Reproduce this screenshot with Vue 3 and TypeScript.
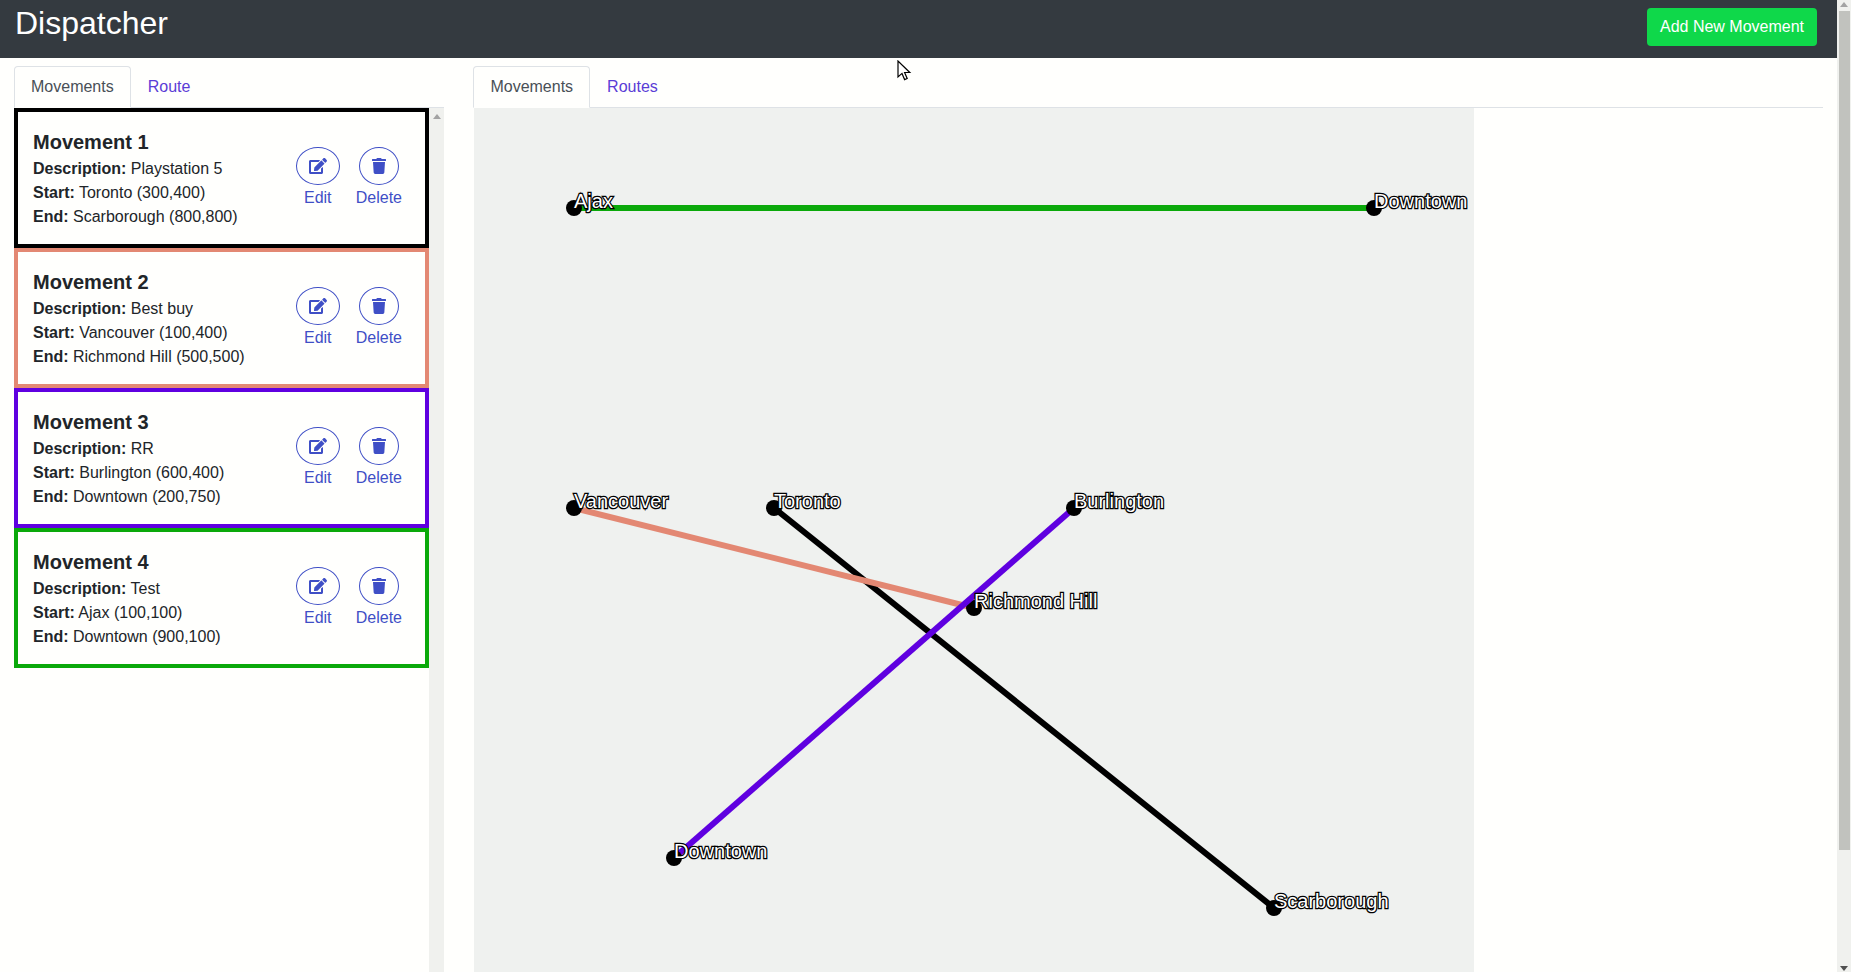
<template>
  <div class="page">
    <div class="content">
      <header class="topbar">
        <h1 class="brand">Dispatcher</h1>
        <button class="add-btn">Add New Movement</button>
      </header>

      <div class="panels">
        <section class="left">
          <ul class="tabs">
            <li class="tab active">Movements</li>
            <li class="tab">Route</li>
          </ul>
          <div class="list-wrap">
            <div class="list">
              <div
                v-for="m in movements"
                :key="m.title"
                class="card"
                :style="{ borderColor: m.color }"
              >
                <div class="card-info">
                  <h5 class="card-title">{{ m.title }}</h5>
                  <div class="card-line"><b>Description:</b> {{ m.description }}</div>
                  <div class="card-line"><b>Start:</b> {{ m.start.name }} ({{ m.start.x }},{{ m.start.y }})</div>
                  <div class="card-line"><b>End:</b> {{ m.end.name }} ({{ m.end.x }},{{ m.end.y }})</div>
                </div>
                <div class="card-actions">
                  <div class="action">
                    <span class="circle edit">
                      <svg class="icon-edit" viewBox="0 0 576 512">
                        <path d="M402.6 83.2l90.2 90.2c3.8 3.8 3.8 10 0 13.8L274.4 405.6l-92.8 10.3c-12.4 1.4-22.9-9.1-21.5-21.5l10.3-92.8L388.8 83.2c3.8-3.8 10-3.8 13.8 0zm162-22.9l-48.8-48.8c-15.2-15.2-39.9-15.2-55.2 0l-35.4 35.4c-3.8 3.8-3.8 10 0 13.8l90.2 90.2c3.8 3.8 10 3.8 13.8 0l35.4-35.4c15.2-15.3 15.2-40 0-55.2zM384 346.2V448H64V128h229.8c3.2 0 6.2-1.3 8.5-3.5l40-40c7.6-7.6 2.2-20.5-8.5-20.5H48C21.5 64 0 85.5 0 112v352c0 26.5 21.5 48 48 48h352c26.5 0 48-21.5 48-48V306.2c0-10.7-12.9-16-20.5-8.5l-40 40c-2.2 2.3-3.5 5.3-3.5 8.5z" />
                      </svg>
                    </span>
                    <span class="action-label">Edit</span>
                  </div>
                  <div class="action">
                    <span class="circle delete">
                      <svg class="icon-trash" viewBox="0 0 448 512">
                        <path d="M432 32H312l-9.4-18.7A24 24 0 0 0 281.1 0H166.8a23.72 23.72 0 0 0-21.4 13.3L136 32H16A16 16 0 0 0 0 48v32a16 16 0 0 0 16 16h416a16 16 0 0 0 16-16V48a16 16 0 0 0-16-16zM53.2 467a48 48 0 0 0 47.9 45h245.8a48 48 0 0 0 47.9-45L416 128H32z" />
                      </svg>
                    </span>
                    <span class="action-label">Delete</span>
                  </div>
                </div>
              </div>
            </div>
            <div class="list-scroll">
              <span class="arrow-up small"></span>
            </div>
          </div>
        </section>

        <section class="right">
          <ul class="tabs">
            <li class="tab active">Movements</li>
            <li class="tab">Routes</li>
          </ul>
          <svg class="map" width="1000" height="864" viewBox="0 0 1000 864">
            <rect width="1000" height="864" fill="#eff1ef" />
            <g v-for="m in movements" :key="m.title">
              <line
                :x1="m.start.x"
                :y1="m.start.y"
                :x2="m.end.x"
                :y2="m.end.y"
                :stroke="m.color"
                stroke-width="6"
              />
              <circle :cx="m.start.x" :cy="m.start.y" r="8" fill="#000" />
              <circle :cx="m.end.x" :cy="m.end.y" r="8" fill="#000" />
            </g>
            <g v-for="m in movements" :key="m.title + '-labels'">
              <text class="node-label" :x="m.start.x" :y="m.start.y">{{ m.start.name }}</text>
              <text class="node-label" :x="m.end.x" :y="m.end.y">{{ m.end.name }}</text>
            </g>
          </svg>
        </section>
      </div>
    </div>

    <aside class="page-scroll">
      <span class="arrow-up"></span>
      <span class="thumb"></span>
      <span class="arrow-down"></span>
    </aside>

    <svg class="cursor" width="16" height="22" viewBox="0 0 16 22">
      <path d="M1 1v16l4-3.6 2.6 6.2 2.6-1.1-2.6-6h5.2z" fill="#fff" stroke="#000" stroke-width="1.2" />
    </svg>
  </div>
</template>

<script setup lang="ts">
type Place = {
  name: string;
  x: number;
  y: number;
};

type Movement = {
  title: string;
  description: string;
  color: string;
  start: Place;
  end: Place;
};

const movements: Movement[] = [
  {
    title: 'Movement 1',
    description: 'Playstation 5',
    color: '#000000',
    start: { name: 'Toronto', x: 300, y: 400 },
    end: { name: 'Scarborough', x: 800, y: 800 }
  },
  {
    title: 'Movement 2',
    description: 'Best buy',
    color: '#e38873',
    start: { name: 'Vancouver', x: 100, y: 400 },
    end: { name: 'Richmond Hill', x: 500, y: 500 }
  },
  {
    title: 'Movement 3',
    description: 'RR',
    color: '#5f00e0',
    start: { name: 'Burlington', x: 600, y: 400 },
    end: { name: 'Downtown', x: 200, y: 750 }
  },
  {
    title: 'Movement 4',
    description: 'Test',
    color: '#0aa90a',
    start: { name: 'Ajax', x: 100, y: 100 },
    end: { name: 'Downtown', x: 900, y: 100 }
  }
];
</script>

<style>
html,
body {
  margin: 0;
  height: 100%;
  overflow: hidden;
  background: #fffffd;
}
</style>

<style scoped>
.page {
  position: relative;
  display: flex;
  width: 1851px;
  height: 972px;
  overflow: hidden;
  font-family: "Liberation Sans", Arial, sans-serif;
  font-size: 16px;
  line-height: 24px;
  color: #212529;
  background: #fffffd;
}

.content {
  flex: 1;
  min-width: 0;
}

.topbar {
  display: flex;
  justify-content: space-between;
  height: 58px;
  padding: 8px 20px 0 15px;
  box-sizing: border-box;
  background: #343a40;
}

.brand {
  margin: -4px 0 0;
  font-size: 32px;
  font-weight: 400;
  line-height: 38px;
  color: #fff;
}

.add-btn {
  width: 170px;
  height: 38px;
  padding: 0;
  border: none;
  border-radius: 4px;
  font-family: inherit;
  font-size: 16px;
  color: #fff;
  background: #0fd84a;
}

.panels {
  display: flex;
}

.left {
  width: 430px;
  margin: 8px 0 0 14px;
}

.right {
  flex: 1;
  margin: 8px 14px 0 30px;
}

.right .tabs {
  margin-left: -0.6px;
}

.tabs {
  display: flex;
  height: 42px;
  margin: 0;
  padding: 0;
  box-sizing: border-box;
  list-style: none;
  border-bottom: 1px solid #dee2e6;
}

.tab {
  height: 42px;
  padding: 8px 16px;
  box-sizing: border-box;
  border: 1px solid transparent;
  border-radius: 4px 4px 0 0;
  color: #5a3dd6;
}

.tab.active {
  color: #495057;
  background: #fffffd;
  border-color: #dee2e6 #dee2e6 #fffffd;
}

.list-wrap {
  display: flex;
  height: 864px;
}

.list {
  width: 415px;
}

.card {
  display: flex;
  align-items: flex-start;
  justify-content: space-between;
  height: 140px;
  padding: 18px 23px 0 15px;
  box-sizing: border-box;
  border: 4px solid #000;
}

.card-title {
  margin: 0 0 3px;
  font-size: 20px;
  font-weight: 700;
  line-height: 24px;
}

.card-line b {
  font-weight: 700;
}

.card-actions {
  display: flex;
  gap: 16px;
  margin-top: 17px;
}

.action {
  display: flex;
  flex-direction: column;
  align-items: center;
  color: #3f4fc6;
}

.circle {
  display: flex;
  align-items: center;
  justify-content: center;
  height: 38px;
  box-sizing: border-box;
  border: 1px solid #3f4fc6;
  border-radius: 50%;
}

.circle.edit {
  width: 44px;
}

.circle.delete {
  width: 40px;
}

.icon-edit {
  width: 18px;
  height: 16px;
  fill: #3f4fc6;
}

.icon-trash {
  width: 14px;
  height: 16px;
  fill: #3f4fc6;
}

.action-label {
  margin-top: 1px;
}

.list-scroll {
  width: 15px;
  background: #f0f1ee;
  display: flex;
  justify-content: center;
  padding-top: 6px;
  box-sizing: border-box;
}

.map {
  display: block;
}

.node-label {
  font-family: "Liberation Sans", Arial, sans-serif;
  font-size: 20px;
  fill: #fff;
  stroke: #000;
  stroke-width: 2.5px;
  paint-order: stroke;
}

.page-scroll {
  position: relative;
  flex: none;
  width: 14px;
  background: #f0f1ee;
}

.thumb {
  position: absolute;
  top: 11px;
  left: 2px;
  width: 11px;
  height: 839px;
  background: #c1c2be;
}

.arrow-up,
.arrow-down {
  position: absolute;
  left: 3px;
  width: 0;
  height: 0;
  border-left: 4px solid transparent;
  border-right: 4px solid transparent;
}

.arrow-up {
  top: 2px;
  border-bottom: 5px solid #a3a3a3;
}

.arrow-down {
  bottom: 1px;
  border-top: 5px solid #505050;
}

.arrow-up.small {
  position: static;
  height: 0;
}

.cursor {
  position: absolute;
  top: 60px;
  left: 897px;
}
</style>
